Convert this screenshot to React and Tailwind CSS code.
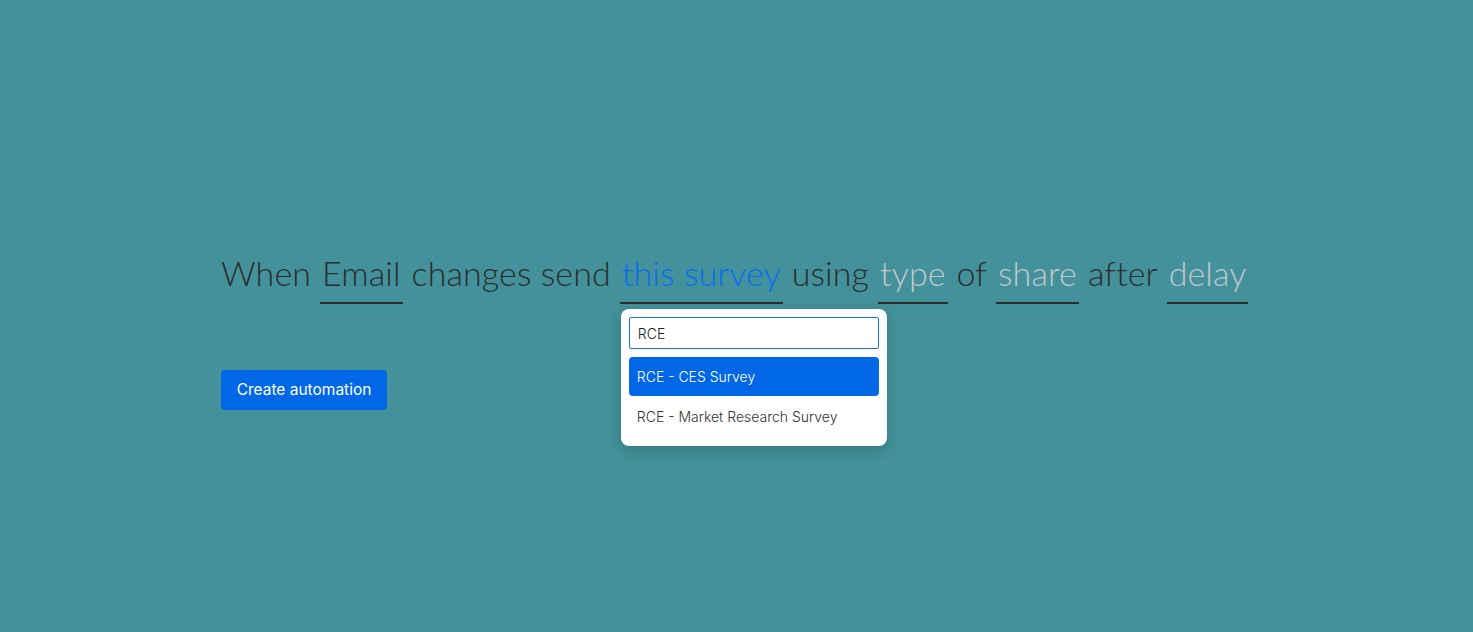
import React from "react";

function Token({ children, color, dropdown }) {
  return (
    <span className="relative inline-block border-b-2 border-[#2a2a2a] px-[2px] pb-[9px] leading-[40px]" style={{ color }}>
      {children}
      {dropdown}
    </span>
  );
}

function Dropdown() {
  return (
    <div className="absolute left-[1px] top-full z-10 mt-[7px] w-[266px] rounded-[8px] bg-white p-[8px] pb-[9px] tracking-normal shadow-[0_4px_14px_rgba(0,0,0,0.18)] font-['Inter',sans-serif] leading-normal">
      <div className="flex h-[32px] items-center rounded-[2px] border border-[#1a6fe0] px-[8px] text-[14px] text-[#222]">
        RCE
      </div>
      <div className="mt-[8px] flex h-[39px] items-center rounded-[4px] bg-[#0067e6] px-[8px] text-[14px] text-white">
        RCE - CES Survey
      </div>
      <div className="flex h-[41px] items-center px-[8px] text-[14px] text-[#333]">
        RCE - Market Research Survey
      </div>
    </div>
  );
}

export default function App() {
  return (
    <div className="min-h-[632px] w-full bg-[#43919a]">
      <div className="mx-auto w-[1031px] pt-[253px]">
        <div className="flex items-baseline gap-[9px] whitespace-nowrap font-['Lato',sans-serif] text-[34px] font-light tracking-[0.1px] text-[#2c2c2c]">
          <span className="leading-[40px]">When</span>
          <Token color="#2c2c2c">Email</Token>
          <span className="leading-[40px]">changes send</span>
          <Token color="#0b6cf2" dropdown={<Dropdown />}>this survey</Token>
          <span className="leading-[40px]">using</span>
          <Token color="#c3c7cd">type</Token>
          <span className="leading-[40px]">of</span>
          <Token color="#c3c7cd">share</Token>
          <span className="leading-[40px]">after</span>
          <Token color="#c3c7cd">delay</Token>
        </div>
        <button className="mt-[66px] flex h-[40px] w-[166px] items-center justify-center rounded-[4px] bg-[#0067e6] font-['Inter',sans-serif] text-[15.5px] text-white">
          Create automation
        </button>
      </div>
    </div>
  );
}
